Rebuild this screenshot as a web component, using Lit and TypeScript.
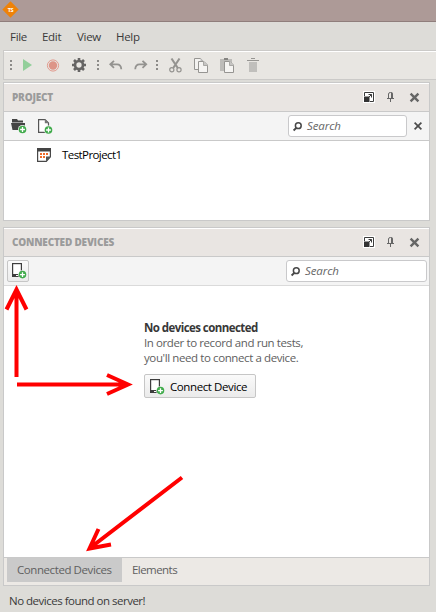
import { LitElement, html, svg, css } from "lit";
import { customElement, property } from "lit/decorators.js";

const plus = (x: number, y: number) => svg`
  <circle cx=${x} cy=${y} r="3.8" fill="#41ab4c"/>
  <path d=${`M${x - 2.4} ${y}h4.8M${x} ${y - 2.4}v4.8`} stroke="#fff" stroke-width="1.3" fill="none"/>`;

const icons: Record<string, [number, number, unknown]> = {
  logo: [17, 17, svg`<path d="M8.5 .3L16.7 8.5L8.5 16.7L.3 8.5Z" fill="#ee8208"/><text x="8.5" y="10.600" text-anchor="middle" font-family="Open Sans" font-weight="700" font-size="5.5" fill="#fff">TS</text>`],
  grip: [2, 10, svg`<path d="M0 0h2v2H0zM0 4h2v2H0zM0 8h2v2H0z" fill="#8c8b88"/>`],
  play: [9, 12, svg`<path d="M0 0L9 6L0 12Z" fill="#93cf9a"/>`],
  record: [13, 13, svg`<circle cx="6" cy="6.5" r="5.6" fill="none" stroke="#e29a8d"/><circle cx="6" cy="6.5" r="4.200" fill="#dd9588"/>`],
  gear: [14, 14, svg`<circle cx="7" cy="7" r="4" fill="none" stroke="#666564" stroke-width="2.700"/><path d="M7 0v3M7 11v3M0 7h3M11 7h3M2 2l2 2M10 10l2 2M2 12l2-2M10 4l2-2" stroke="#666564" stroke-width="2.600"/>`],
  undo: [14, 10, svg`<path d="M5 .8L1.300 4.300L5 7.800M1.500 4.300H8Q12 4.300 12.300 9.200" fill="none" stroke="#949390" stroke-width="1.800"/>`],
  redo: [14, 10, svg`<path d="M8.500 .8L12.200 4.300L8.500 7.800M12 4.300H5.500Q1.500 4.300 1.200 9.200" fill="none" stroke="#949390" stroke-width="1.800"/>`],
  cut: [13, 15, svg`<path d="M2.500 .5L8.800 10M10.500 .5L4.200 10" stroke="#959491" stroke-width="2.100"/><circle cx="2.800" cy="11.800" r="2.100" fill="none" stroke="#959491" stroke-width="1.200"/><circle cx="10" cy="11.800" r="2.100" fill="none" stroke="#959491" stroke-width="1.200"/>`],
  copy: [14, 15, svg`<path d="M.5 .5h6l2.500 2.500v8.500h-8.500z" fill="#f3f2f0" stroke="#969592"/><path d="M6.500 0l4 4h-4z" fill="#bbb"/><path d="M4.500 3.500h5.500l3.500 3.500v7.500h-9z" fill="#f5f4f2" stroke="#969592"/><path d="M9.500 3v4.500h4.500z" fill="#c5c4c2" stroke="none"/><path d="M9.500 3.500v4h4" fill="none" stroke="#a9a8a5"/>`],
  paste: [14, 15, svg`<path d="M0 1h12v12H0z" fill="#bdbcb9"/><path d="M4 0h4v2H4z" fill="#858481"/><path d="M4.500 3.500h5.500l3.500 3.500v7.500h-9z" fill="#f5f4f2" stroke="#969592"/><path d="M9.500 3v4.500h4.500z" fill="#c5c4c2"/><path d="M9.500 3.500v4h4" fill="none" stroke="#a9a8a5"/>`],
  trash: [12, 14, svg`<path d="M4 0h4v1H4zM0 2h12v1H0z" fill="#969592"/><path d="M2 4h8v10H2z" fill="#c0bfbc"/>`],
  folder: [15, 14, svg`<path d="M1 0h5l1 1.500h5v2H1zM0 4h14v7H1.500z" fill="#444"/><circle cx="11.500" cy="10.500" r="4.500" fill="#f4f4f4"/>${plus(11.5, 10.5)}`],
  file: [15, 15, svg`<path d="M.6 .6h6.400l3.500 3.500v9.300H.6z" fill="#fff" stroke="#555" stroke-width="1.200"/><path d="M6.800 0L11 4.300H6.800z" fill="#777"/><circle cx="10.500" cy="11" r="4.500" fill="#f4f4f4"/>${plus(10.5, 11)}`],
  project: [14, 14, svg`<path d="M.6 1h12.800v7.800L9.300 13.400H.6z" fill="#fff" stroke="#484848" stroke-width="1.200"/><path d="M0 0h14v3.500H0z" fill="#444"/><path d="M14 8.500h-5v5z" fill="#555"/><path d="M3 5h2v2H3zM6 5h2v2H6zM9 5h2v2H9zM3 8h2v2H3zM6 8h2v2H6z" fill="#ef6a28"/>`],
  float: [12, 12, svg`<path d="M0 0h12v12H0z" fill="#fff"/><path d="M1.500 5V1.500h9v9H7" fill="none" stroke="#3c3c3c"/><path d="M1 5.500h5.500V11H1z" fill="#333"/><path d="M5.500 3.500h3v3M8.500 3.500L6 6" fill="none" stroke="#3c3c3c"/>`],
  pin: [7, 10, svg`<path d="M1.500 6V2Q1.500 .5 3.500 .5T5.500 2V6M0 6.500h7M3.500 7v3" fill="none" stroke="#666"/><path d="M4 .5h1.500v6H4z" fill="#666"/>`],
  close: [9, 9, svg`<path d="M.6 .6L8.400 8.400M8.400 .6L.6 8.400" stroke="#666" stroke-width="2.400"/>`],
  clear: [8, 8, svg`<path d="M.6 .6L7.400 7.400M7.400 .6L.6 7.400" stroke="#4c4c4c" stroke-width="1.700"/>`],
  search: [9, 9, svg`<circle cx="5.300" cy="3.700" r="2.900" fill="none" stroke="#484848" stroke-width="1.500"/><path d="M3.300 5.800L.6 8.500" stroke="#484848" stroke-width="1.900"/>`],
  device: [14, 16, svg`<path d="M0 0h10v14H0z" fill="#3d3d3d"/><path d="M1.200 1.200h7.600v9.800H1.200z" fill="#fff"/><path d="M4 12h2v1H4z" fill="#fff"/><circle cx="10.500" cy="11.600" r="4.400" fill="#f4f4f4"/>${plus(10.5, 11.6)}`],
};

@customElement("ui-icon")
class UiIcon extends LitElement {
  static styles = css`:host{display:block;flex:none}svg{display:block;overflow:visible}`;
  @property() name = "";
  render() {
    const [w, h, body] = icons[this.name];
    return html`<svg width=${w} height=${h} viewBox="0 0 ${w} ${h}">${body}</svg>`;
  }
}

@customElement("app-root")
class AppRoot extends LitElement {
  static styles = css`
    :host{display:flex;flex-direction:column;position:relative;width:436px;height:612px;overflow:hidden;background:#dddcd8;font:11.5px/16px "Open Sans","Noto Sans",sans-serif;letter-spacing:-.42px;color:#3a3a3a}
    *{box-sizing:border-box}
    .title{height:22px;background:#ad9a97;border-bottom:1px solid #8f7e7c;padding:1px 0 0 2px;flex:none}
    .menu{display:flex;height:28px;flex:none;padding:7px 0 0 10px;letter-spacing:-.3px}
    .menu span{flex:none;white-space:nowrap}
    .file{width:32px}.edit{width:35px}.view{width:39px}
    .tools{display:flex;align-items:center;height:30px;flex:none;margin-left:3px;border:1px solid #cbcac8;border-right:0;box-shadow:inset 0 1px #fff;background:#e8e6e2;padding-left:6px}
    .g8{margin-left:8px}.g10{margin-left:10px}.g11{margin-left:11px}.g12{margin-left:12px}.g13{margin-left:13px}.g15{margin-left:15px}
    .panel{display:flex;flex-direction:column;margin:0 6px 0 3px;border:1px solid #c9c9c9;background:#fff;flex:none}
    .project{height:139px;margin-top:2px}
    .devices{height:359px;margin-top:6px}
    .head{display:flex;align-items:center;height:29px;flex:none;background:#e9e5e2;border-bottom:1px solid #c9c9c9;box-shadow:inset 0 1px #fff;padding:0 10px 0 8px;color:#9b9b9b;font-weight:700;font-size:10px;letter-spacing:-.2px}
    .head b{margin-right:auto}
    .pin{margin:0 16px 0 12px}
    .bar{display:flex;align-items:center;height:29px;flex:none;background:#f4f4f4;border-bottom:1px solid #c9c9c9;padding:0 7px}
    .field{display:flex;align-items:center;gap:5px;height:22px;margin-left:auto;border:1px solid #c9c9cb;border-radius:3px;background:#fff;padding-left:4px;font-size:11.5px;font-style:italic;letter-spacing:-.1px;color:#666}
    .s1{width:119px;margin-right:7px}.s2{width:141px}
    .devbar{padding:0 2px 0 3px;border-color:#dadada}
    .btn{display:flex;align-items:center;border:1px solid #c6c6c6;border-radius:2px;background:linear-gradient(#fafafa,#ebebeb);color:#000}
    .add{width:22px;height:22px;padding:0 0 0 4px}
    .item{display:flex;align-items:center;gap:11px;padding:6px 0 0 33px;color:#000;letter-spacing:-.58px}
    .body{flex:1;padding:34px 0 0 140px;line-height:15px;color:#606060;letter-spacing:-.4px}
    .body b{display:block;color:#383838;letter-spacing:-.56px}
    .connect{width:112px;height:24px;margin-top:9px;padding:1px 0 0 5px;gap:6px}
    .tabs{display:flex;height:28px;flex:none;border-top:1px solid #c9c9c9;background:#ece9e5;padding:0 3px;color:#606060}
    .tab{height:24px;padding:4px 10px 0}
    .el{letter-spacing:-.55px}
    .on{background:#cacaca;width:115px}
    .status{padding:7px 9px;letter-spacing:-.5px}
    .arrows{position:absolute;left:0;top:0;pointer-events:none}
    .t{white-space:nowrap}
  `;
  controls() {
    return html`<ui-icon name="float"></ui-icon><ui-icon class="pin" name="pin"></ui-icon><ui-icon name="close"></ui-icon>`;
  }
  render() {
    return html`
      <div class="title"><ui-icon name="logo"></ui-icon></div>
      <div class="menu"><span class="file">File</span><span class="edit">Edit</span><span class="view">View</span><span>Help</span></div>
      <div class="tools">
        <ui-icon name="grip"></ui-icon><ui-icon class="g11" name="play"></ui-icon><ui-icon class="g15" name="record"></ui-icon><ui-icon class="g12" name="gear"></ui-icon>
        <ui-icon class="g11" name="grip"></ui-icon><ui-icon class="g10" name="undo"></ui-icon><ui-icon class="g11" name="redo"></ui-icon>
        <ui-icon class="g8" name="grip"></ui-icon><ui-icon class="g11" name="cut"></ui-icon><ui-icon class="g12" name="copy"></ui-icon><ui-icon class="g12" name="paste"></ui-icon><ui-icon class="g13" name="trash"></ui-icon>
      </div>
      <section class="panel project">
        <div class="head"><b class="t">PROJECT</b>${this.controls()}</div>
        <div class="bar"><ui-icon name="folder"></ui-icon><ui-icon class="g12" name="file"></ui-icon>
          <div class="field s1"><ui-icon name="search"></ui-icon><span class="t">Search</span></div><ui-icon name="clear"></ui-icon></div>
        <div class="item"><ui-icon name="project"></ui-icon><span class="t">TestProject1</span></div>
      </section>
      <section class="panel devices">
        <div class="head"><b class="t">CONNECTED DEVICES</b>${this.controls()}</div>
        <div class="bar devbar"><div class="btn add"><ui-icon name="device"></ui-icon></div>
          <div class="field s2"><ui-icon name="search"></ui-icon><span class="t">Search</span></div></div>
        <div class="body"><b class="t">No devices connected</b><div class="t">In order to record and run tests,</div><div class="t">you'll need to connect a device.</div>
          <div class="btn connect"><ui-icon name="device"></ui-icon><span class="t">Connect Device</span></div></div>
        <div class="tabs"><div class="tab on t">Connected Devices</div><div class="tab el t">Elements</div></div>
      </section>
      <div class="status t">No devices found on server!</div>
      <svg class="arrows" width="436" height="612" fill="none" stroke="#f00" stroke-width="4">
        <path d="M16.500 377V291M6.500 309.500L16.500 289.500L26.500 309.500M17 384.500H127M107 375L128 384.500L107 394"/>
        <path d="M182 477.500L90 548M98.500 529L89.500 548.500L111 544.500"/>
      </svg>`;
  }
}
